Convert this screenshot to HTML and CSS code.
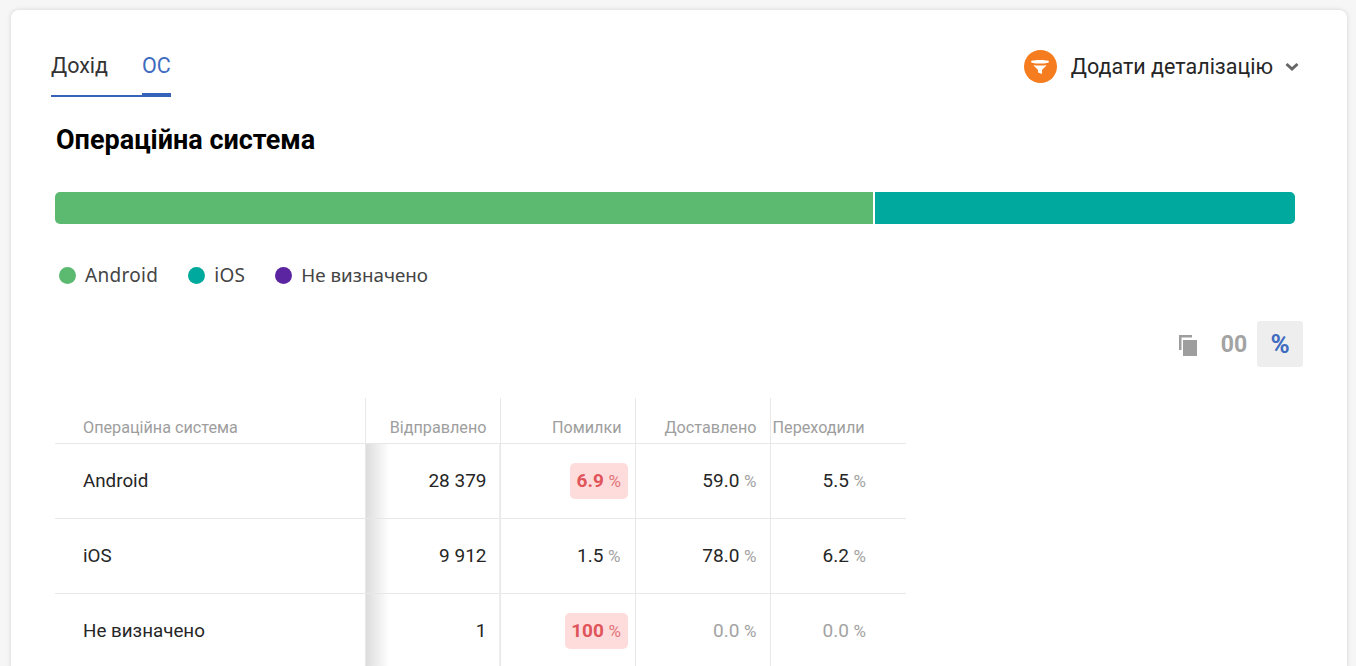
FILE: index.html
```html
<!DOCTYPE html>
<html lang="uk">
<head>
  <meta charset="UTF-8">
  <title>Операційна система</title>
  <link rel="stylesheet" href="styles.css">
</head>
<body>
  <div class="card">
    <!-- tabs -->
    <div class="top-row">
      <div class="tabs">
        <div class="tab">Дохід</div>
        <div class="tab active">ОС</div>
      </div>
      <div class="detail-btn">
        <span class="detail-icon">
          <svg width="20" height="20" viewBox="0 0 20 20"><path fill="#fff" d="M1 5.500C1 3.500 19 3.500 19 5.500C19 7 16 7.500 10 7.500C4 7.500 1 7 1 5.500z"/><path fill="#fff" d="M3.500 9C6 9.800 14 9.800 16.500 9C15 11.500 12.500 13 12 14V18L8 16.500V14C7.500 13 5 11.500 3.500 9z"/></svg>
        </span>
        <span class="detail-text">Додати деталізацію</span>
        <svg class="chevron" width="14" height="10" viewBox="0 0 14 10"><path fill="none" stroke="#666" stroke-width="3" d="M1.500 2l5.500 5 5.500-5"/></svg>
      </div>
    </div>

    <h2 class="title">Операційна система</h2>

    <div class="bar">
      <div class="bar-android"></div>
      <div class="bar-ios"></div>
    </div>

    <div class="legend">
      <div class="legend-item latin"><span class="dot dot-android"></span>Android</div>
      <div class="legend-item latin"><span class="dot dot-ios"></span>iOS</div>
      <div class="legend-item"><span class="dot dot-none"></span>Не визначено</div>
    </div>

    <!-- switch -->
    <div class="view-switch">
      <svg class="copy-icon" width="19" height="22" viewBox="0 0 19 22"><path fill="#9e9e9e" d="M0 0h13v2.500H2.500V15H0z"/><rect fill="#9e9e9e" x="4" y="5" width="14" height="16"/></svg>
      <span class="switch-num">00</span>
      <span class="switch-pct">%</span>
    </div>

    <table class="stats">
      <thead>
        <tr>
          <th class="col-name">Операційна система</th>
          <th>Відправлено</th>
          <th>Помилки</th>
          <th>Доставлено</th>
          <th class="col-last">Переходили</th>
        </tr>
      </thead>
      <tbody>
        <tr>
          <td class="col-name">Android</td>
          <td class="col-sent">28 379</td>
          <td><span class="bad"><b>6.9</b> <i>%</i></span></td>
          <td>59.0 <i>%</i></td>
          <td class="col-last">5.5 <i>%</i></td>
        </tr>
        <tr>
          <td class="col-name">iOS</td>
          <td class="col-sent">9 912</td>
          <td><span class="plain">1.5 <i>%</i></span></td>
          <td>78.0 <i>%</i></td>
          <td class="col-last">6.2 <i>%</i></td>
        </tr>
        <tr>
          <td class="col-name">Не визначено</td>
          <td class="col-sent">1</td>
          <td><span class="bad"><b>100</b> <i>%</i></span></td>
          <td class="muted">0.0 <i>%</i></td>
          <td class="col-last muted">0.0 <i>%</i></td>
        </tr>
      </tbody>
    </table>
  </div>
</body>
</html>
```

FILE: styles.css
```css
html, body {
  height: 666px;
  overflow: hidden;
}

body {
  margin: 0;
  padding: 10px 9px 0 11px;
  background: #f6f6f6;
  font-family: Roboto, sans-serif;
  color: #262626;
}

.card {
  background: #fff;
  border-radius: 8px 8px 0 0;
  box-shadow: 0 0 5px rgba(0,0,0,0.14);
  padding: 0 44px;
  height: 660px;
}

/* === TOP === */
.top-row {
  display: flex;
  justify-content: space-between;
  align-items: flex-start;
  padding-top: 37px;
}

.tabs {
  display: flex;
  gap: 34px;
  margin-left: -4px;
  height: 50px;
  box-sizing: border-box;
  border-bottom: 2px solid #3563b9;
}

.tab {
  font-size: 21.5px;
  line-height: 38px;
  height: 48px;
  box-sizing: border-box;
  color: #333;
}

.tab.active {
  color: #3f6cc0;
  border-bottom: 4px solid #3563b9;
  margin-bottom: -2px;
  height: 50px;
}

.detail-btn {
  display: flex;
  align-items: center;
  margin-right: 4px;
  height: 38px;
}

.detail-icon {
  width: 33px;
  height: 33px;
  border-radius: 50%;
  background: #f57c1f;
  display: flex;
  align-items: center;
  justify-content: center;
}

.detail-text {
  font-size: 21.5px;
  margin-left: 14px;
}

.chevron {
  margin-left: 12px;
  margin-top: 2px;
}

.title {
  font-size: 27px;
  font-weight: 700;
  color: #000;
  line-height: 32px;
  margin: 27px 0 0 1px;
}

/* === BAR === */
.bar {
  display: flex;
  height: 32px;
  margin-top: 36px;
  width: 1240px;
  border-radius: 5px;
  overflow: hidden;
}

.bar-android {
  width: 818px;
  background: #5cb970;
}

.bar-ios {
  flex: 1;
  margin-left: 2px;
  background: #00a99d;
}

.legend {
  display: flex;
  gap: 30px;
  margin-top: 38px;
  margin-left: 4px;
  font-family: "Noto Sans", sans-serif;
  font-size: 18.8px;
  line-height: 26px;
  color: #444;
}

.legend-item {
  display: flex;
  align-items: center;
  gap: 9px;
}

.legend-item.latin {
  font-size: 19px;
  letter-spacing: 0.3px;
}

.dot {
  width: 17px;
  height: 17px;
  border-radius: 50%;
}

.dot-android { background: #5cb970; }
.dot-ios { background: #00a99d; }
.dot-none { background: #5b24a0; }

/* === SWITCH === */
.view-switch {
  display: flex;
  justify-content: flex-end;
  align-items: center;
  height: 46px;
  margin-top: 33px;
}

.copy-icon {
  margin-right: 18px;
  margin-top: 4px;
}

.switch-num {
  font-size: 23px;
  font-weight: 700;
  color: #a3a3a3;
  width: 36px;
  text-align: center;
}

.switch-pct {
  width: 46px;
  height: 46px;
  line-height: 46px;
  margin-left: 5px;
  text-align: center;
  font-size: 26px;
  font-weight: 700;
  color: #3f6cc0;
  background: #eeeeee;
  border-radius: 3px;
}

/* === TABLE === */
.stats {
  table-layout: fixed;
  border-collapse: collapse;
  width: 851px;
  margin-top: 31px;
}

.stats th {
  width: 135px;
  height: 45px;
  box-sizing: border-box;
  padding: 15px 13px 0 0;
  text-align: right;
  font-size: 16.2px;
  font-weight: 400;
  color: #9e9e9e;
  border-left: 1px solid #e8e8e8;
  border-bottom: 1px solid #e8e8e8;
}

.stats th.col-name {
  width: 310px;
  text-align: left;
  padding-left: 28px;
  border-left: none;
}

.stats th.col-last {
  padding: 15px 0 0 2px;
  text-align: left;
  width: 136px;
}

.stats td {
  height: 75px;
  box-sizing: border-box;
  padding: 0 13px 0 0;
  text-align: right;
  font-size: 19px;
  border-left: 1px solid #e8e8e8;
  border-bottom: 1px solid #e8e8e8;
}

.stats td.col-name {
  text-align: left;
  padding-left: 28px;
  border-left: none;
  font-size: 18.8px;
}

.stats td.col-sent {
  background: linear-gradient(to right, #dcdcdc, #ffffff 24px);
}

.stats td.col-last {
  padding-right: 40px;
}

.stats i {
  font-style: normal;
  font-size: 17px;
  color: #a3a3a3;
}

.stats td.muted {
  color: #a3a3a3;
}

.bad {
  display: inline-block;
  margin-right: -6px;
  padding: 0 6.5px;
  line-height: 36px;
  background: #ffdcdc;
  border-radius: 5px;
  color: #e0555a;
}

.bad i {
  color: #e0777b;
}

.plain {
  margin-right: 1px;
}
```
